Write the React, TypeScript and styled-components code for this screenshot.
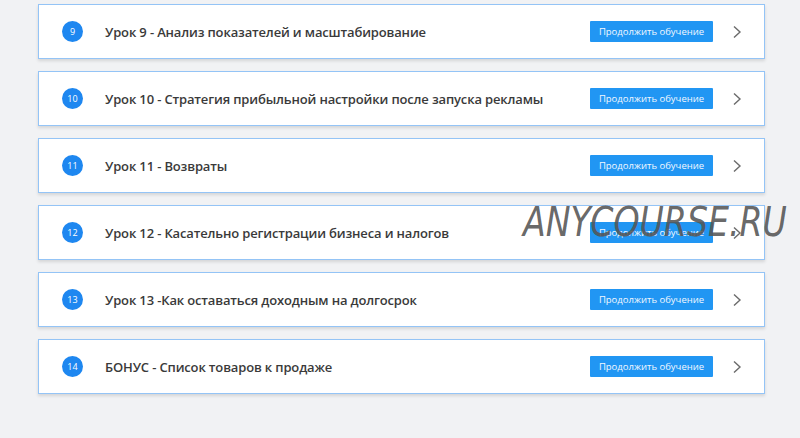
import { createGlobalStyle } from "styled-components";
import styled from "styled-components";

const GlobalStyle = createGlobalStyle`
  html, body {
    margin: 0;
    padding: 0;
    background: #f1f2f4;
    font-family: "Open Sans", "Noto Sans", sans-serif;
  }
`;

interface Lesson {
  num: number;
  title: string;
}

const lessons: Lesson[] = [
  { num: 9, title: "Урок 9 - Анализ показателей и масштабирование" },
  { num: 10, title: "Урок 10 - Стратегия прибыльной настройки после запуска рекламы" },
  { num: 11, title: "Урок 11 - Возвраты" },
  { num: 12, title: "Урок 12 - Касательно регистрации бизнеса и налогов" },
  { num: 13, title: "Урок 13 -Как оставаться доходным на долгосрок" },
  { num: 14, title: "БОНУС - Список товаров к продаже" },
];

export default function App() {
  return (
    <>
      <GlobalStyle />
      <Page>
        <List>
          {lessons.map((l) => (
            <Card key={l.num}>
              <Badge>{l.num}</Badge>
              <Title>{l.title}</Title>
              <ContinueButton>Продолжить обучение</ContinueButton>
              <Chevron viewBox="0 0 10 14" width="10" height="14">
                <path d="M2 1.5 L8 7 L2 12.5" fill="none" stroke="#6b6b6b" strokeWidth="1.4" />
              </Chevron>
            </Card>
          ))}
        </List>
        <Watermark>ANYCOURSE.RU</Watermark>
      </Page>
    </>
  );
}

const Page = styled.div`
  position: relative;
  width: 800px;
  height: 438px;
  overflow: hidden;
  padding: 4px 0 0 38px;
  box-sizing: border-box;
`;

const List = styled.div`
  display: flex;
  flex-direction: column;
  gap: 12px;
  width: 727px;
`;

const Card = styled.div`
  display: flex;
  align-items: center;
  height: 55px;
  box-sizing: border-box;
  background: #fff;
  border: 1.5px solid #94c4f6;
  box-shadow: 0 2px 3px rgba(0, 0, 0, 0.12);
  padding: 0 22px 0 23px;
`;

const Badge = styled.div`
  display: flex;
  align-items: center;
  justify-content: center;
  width: 21px;
  height: 21px;
  border-radius: 50%;
  background: #1e87f0;
  color: #fff;
  font-size: 9px;
  flex-shrink: 0;
`;

const Title = styled.div`
  flex: 1;
  margin-left: 22px;
  font-size: 13px;
  font-weight: 600;
  color: #3a3a3a;
  letter-spacing: -0.15px;
`;

const ContinueButton = styled.button`
  width: 123px;
  height: 21px;
  border: none;
  border-radius: 1px;
  background: #2196f3;
  color: #f2f8ff;
  font-family: "Open Sans", sans-serif;
  font-size: 9.5px;
  padding: 0;
  cursor: pointer;
`;

const Chevron = styled.svg`
  margin-left: 19px;
`;

const Watermark = styled.div`
  position: absolute;
  left: 523px;
  top: 199px;
  font-family: "DejaVu Sans", sans-serif;
  font-size: 40px;
  font-weight: 300;
  font-style: italic;
  color: rgba(85, 85, 85, 0.9);
  transform: scaleX(0.83);
  transform-origin: left top;
  pointer-events: none;
`;
